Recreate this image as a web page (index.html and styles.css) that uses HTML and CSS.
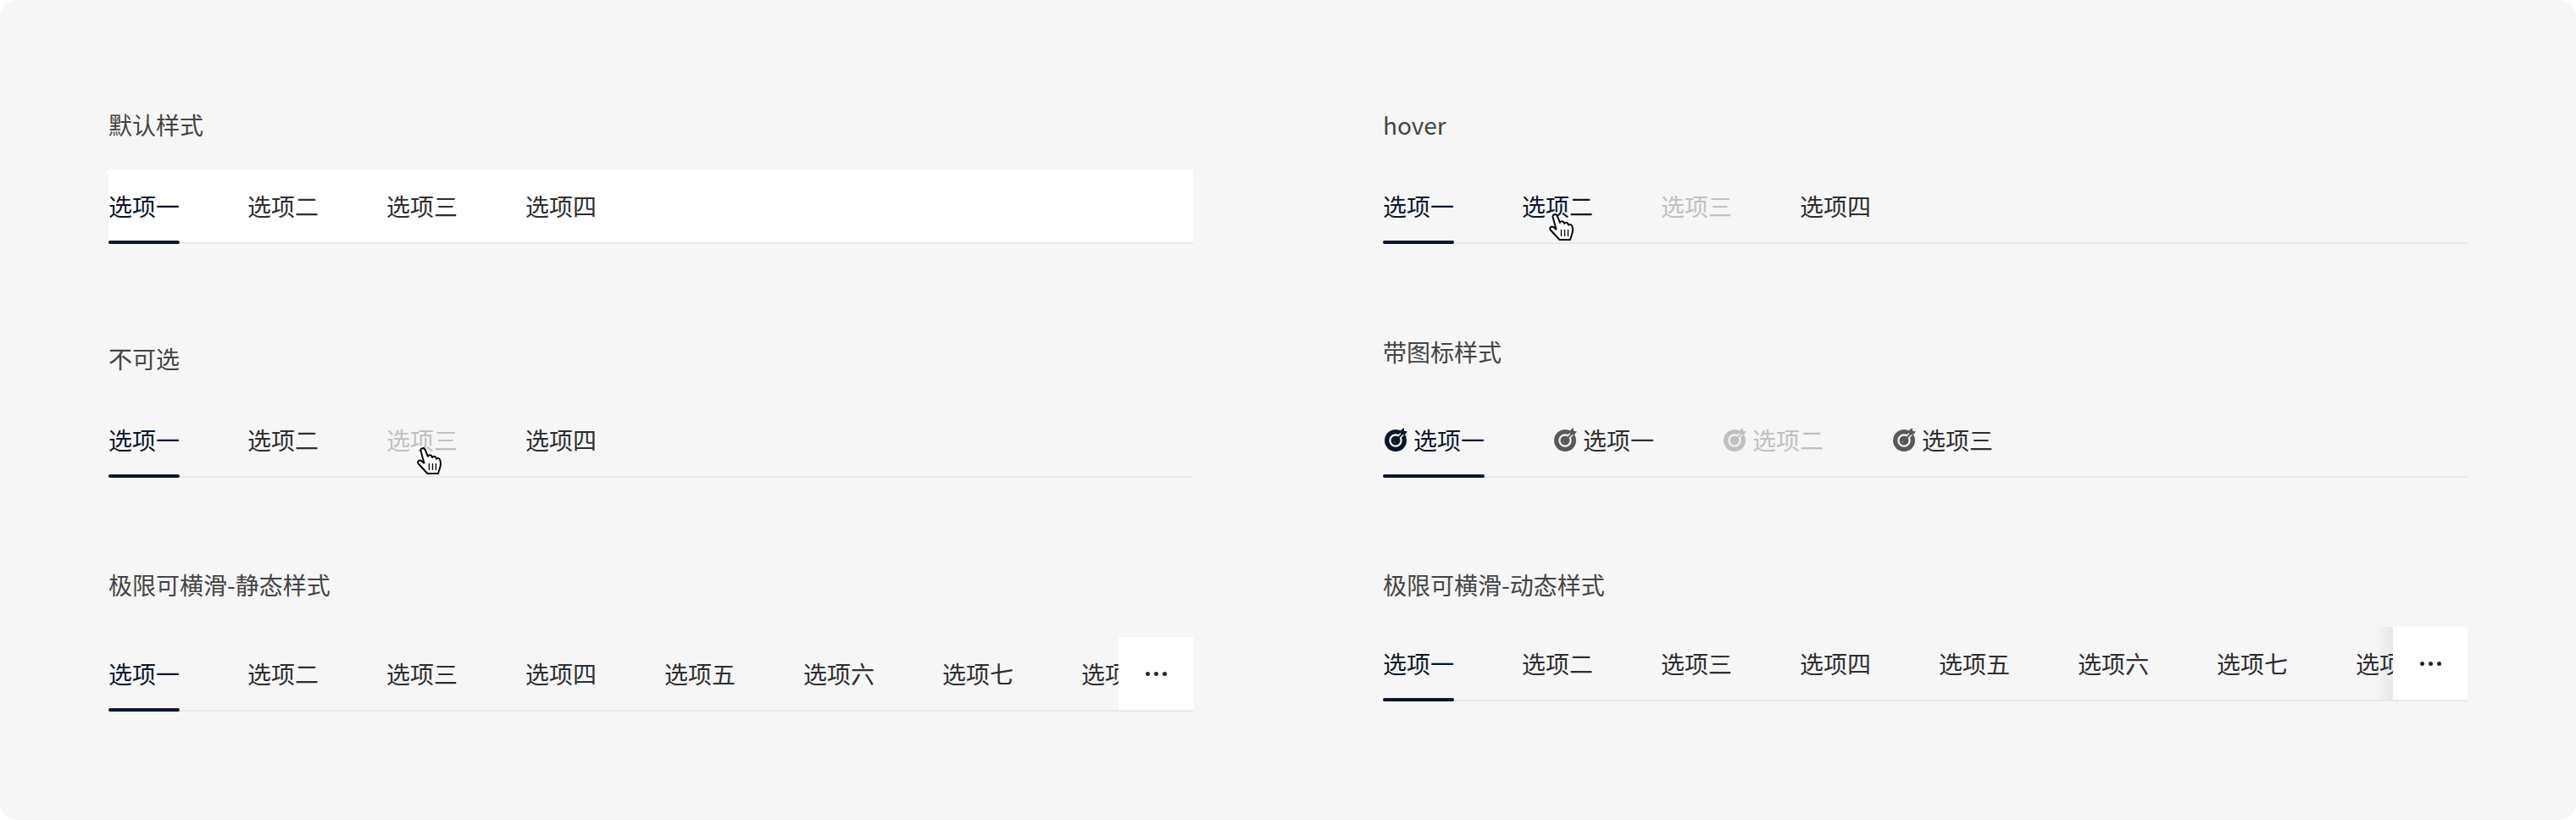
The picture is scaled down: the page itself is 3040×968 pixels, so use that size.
FILE: index.html
```html
<!DOCTYPE html>
<html lang="zh-CN">
<head>
    <meta charset="UTF-8">
    <title>Tabs</title>
    <link rel="stylesheet" href="styles.css">
</head>
<body>
    <svg class="defs" width="0" height="0">
        <symbol id="target" viewBox="0 0 28 28">
            <circle cx="13" cy="15" r="13" fill="currentColor"/>
            <circle cx="13" cy="15" r="6.600" fill="none" stroke="#f6f6f6" stroke-width="2.200"/>
            <path fill="none" stroke="#f6f6f6" stroke-width="5" d="M17 11L27 1"/>
            <path fill="none" stroke="#f6f6f6" stroke-width="1.600" d="M13 15l-2 2"/>
            <path fill="none" stroke="currentColor" stroke-width="2" d="M12.500 15.500L21 7"/>
            <path fill="currentColor" d="M18.500 6.500L19 3l3.500-3 .8 3.700L27 4.500l-3 3.500-3.500.5z"/>
            <circle cx="13" cy="15" r="2.400" fill="currentColor"/>
        </symbol>
    </svg>

    <div class="page">
        <div class="column">
            <section class="block">
                <h2 class="block-title">默认样式</h2>
                <div class="tabs tabs-white">
                    <a class="tab active">选项一</a>
                    <a class="tab">选项二</a>
                    <a class="tab">选项三</a>
                    <a class="tab">选项四</a>
                </div>
            </section>
            <section class="block block-second">
                <h2 class="block-title">不可选</h2>
                <div class="tabs">
                    <a class="tab active">选项一</a>
                    <a class="tab">选项二</a>
                    <a class="tab disabled">选项三</a>
                    <a class="tab">选项四</a>
                    <svg class="hand hand-disabled" viewBox="0 0 30 32"><use href="#hand"/></svg>
                </div>
            </section>
            <section class="block block-third">
                <h2 class="block-title">极限可横滑-静态样式</h2>
                <div class="tabs">
                    <a class="tab active">选项一</a>
                    <a class="tab">选项二</a>
                    <a class="tab">选项三</a>
                    <a class="tab">选项四</a>
                    <a class="tab">选项五</a>
                    <a class="tab">选项六</a>
                    <a class="tab">选项七</a>
                    <a class="tab">选项八</a>
                    <div class="more"><i></i><i></i><i></i></div>
                </div>
            </section>
        </div>

        <div class="column">
            <section class="block">
                <h2 class="block-title">hover</h2>
                <div class="tabs">
                    <a class="tab active">选项一</a>
                    <a class="tab hovered">选项二</a>
                    <a class="tab disabled">选项三</a>
                    <a class="tab">选项四</a>
                    <svg class="hand hand-hover" viewBox="0 0 30 32">
                        <g id="hand">
                            <path fill="#fff" stroke="#0a0a0a" stroke-width="2" stroke-linejoin="round" d="M4.500 4c-.6-2.600 3.800-4.200 5.200-1.200l3.300 8c.3-2 3.500-2.300 4.400-.3l.8 1.600c.5-1.800 3.300-2 4.100-.1l.8 1.700c.8-1.300 3.300-1 4 .8 1.200 3.300 1.200 6.300.2 9.200L25 31H12.500L1.800 19.500c-1.800-2.400 1-5 3.400-3.400l3.300 2.500z"/>
                            <path fill="none" stroke="#0a0a0a" stroke-width="1.400" d="M14.500 19v8M18.500 19v8M22.500 19v8"/>
                        </g>
                    </svg>
                </div>
            </section>
            <section class="block block-icons">
                <h2 class="block-title">带图标样式</h2>
                <div class="tabs">
                    <a class="tab active"><svg class="tab-icon"><use href="#target"/></svg>选项一</a>
                    <a class="tab"><svg class="tab-icon"><use href="#target"/></svg>选项一</a>
                    <a class="tab disabled"><svg class="tab-icon"><use href="#target"/></svg>选项二</a>
                    <a class="tab"><svg class="tab-icon"><use href="#target"/></svg>选项三</a>
                </div>
            </section>
            <section class="block block-dynamic">
                <h2 class="block-title">极限可横滑-动态样式</h2>
                <div class="tabs">
                    <a class="tab active">选项一</a>
                    <a class="tab">选项二</a>
                    <a class="tab">选项三</a>
                    <a class="tab">选项四</a>
                    <a class="tab">选项五</a>
                    <a class="tab">选项六</a>
                    <a class="tab">选项七</a>
                    <a class="tab">选项八</a>
                    <div class="more more-shadow"><i></i><i></i><i></i></div>
                </div>
            </section>
        </div>
    </div>
</body>
</html>
```

FILE: styles.css
```css
html, body {
    margin: 0;
    height: 100%;
}
body {
    background: #fff;
    font-family: "Noto Sans CJK SC", sans-serif;
    overflow: hidden;
}
.defs {
    display: block;
    height: 0;
}
.page {
    display: flex;
    gap: 224px;
    box-sizing: border-box;
    height: 100%;
    padding: 127px 128px 0;
    border-radius: 20px;
    background: #f6f6f6;
}
.column {
    width: 1280px;
}
.block-title {
    margin: 0;
    font-size: 28px;
    font-weight: 400;
    line-height: 40px;
    color: #444;
}
.block-second {
    margin-top: 115px;
}
.block-third {
    margin-top: 106px;
}
.block-icons {
    margin-top: 107px;
}
.block-dynamic {
    margin-top: 106px;
}
.tabs {
    position: relative;
    display: flex;
    gap: 80px;
    height: 88px;
    margin-top: 33px;
    overflow: hidden;
    box-shadow: inset 0 -2px #e9e9e9;
}
.tabs-white {
    background: #fff;
}
.block-third .tabs {
    margin-top: 42px;
}
.block-icons .tabs {
    margin-top: 41px;
}
.block-dynamic .tabs {
    margin-top: 30px;
}
.tab {
    position: relative;
    flex: none;
    display: flex;
    align-items: center;
    box-sizing: border-box;
    height: 88px;
    padding-bottom: 3px;
    font-size: 28px;
    line-height: 40px;
    color: #2e2e2e;
}
.tab.active,
.tab.hovered {
    color: #0a1629;
}
.tab.active::after {
    content: "";
    position: absolute;
    left: 0;
    right: 0;
    bottom: 0;
    height: 4px;
    border-radius: 2px;
    background: #0a1629;
}
.tab.disabled {
    color: #c0c0c0;
}
.tab-icon {
    width: 28px;
    height: 28px;
    margin: 0 6px 0 2px;
    color: #595959;
}
.tab.active .tab-icon {
    color: #0a1629;
}
.tab.disabled .tab-icon {
    color: #c0c0c0;
}
.more {
    position: absolute;
    top: 0;
    right: 0;
    display: flex;
    align-items: center;
    justify-content: center;
    gap: 5px;
    width: 88px;
    height: 86px;
    background: #fff;
}
.more i {
    width: 5px;
    height: 5px;
    border-radius: 50%;
    background: #262626;
}
.more-shadow::before {
    content: "";
    position: absolute;
    top: 0;
    left: -22px;
    width: 22px;
    height: 86px;
    background: linear-gradient(to right, rgba(0, 0, 0, 0), rgba(0, 0, 0, .06));
}
.hand {
    position: absolute;
    width: 30px;
    height: 32px;
}
.hand-disabled {
    left: 364px;
    top: 52px;
}
.hand-hover {
    left: 196px;
    top: 52px;
}
```
